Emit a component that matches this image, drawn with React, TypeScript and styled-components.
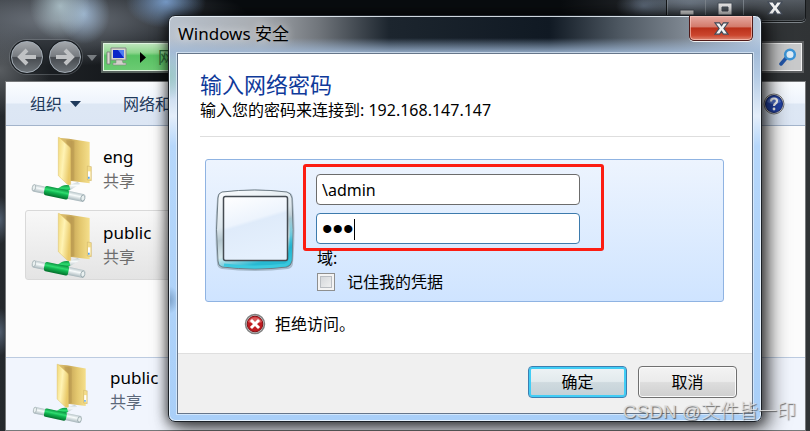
import React from "react";
import styled, { createGlobalStyle, css } from "styled-components";

const GlobalStyle = createGlobalStyle`
  * { box-sizing: border-box; }
  body {
    margin: 0;
    background: #101214;
    color: #000;
    font: 16px/24px "Noto Sans", "Noto Sans CJK SC", sans-serif;
  }
  button, input { font: inherit; color: inherit; }
`;

/* ---------- explorer window ---------- */

const Desktop = styled.div`
  position: relative;
  min-height: 100vh;
  display: flex;
  overflow: hidden;
`;

const Explorer = styled.main`
  flex: 1;
  display: flex;
  flex-direction: column;
  padding: 0 4px 0 5px;
  background:
    radial-gradient(ellipse 30px 34px at 60px 6px, rgba(190, 214, 222, 0.75), transparent),
    radial-gradient(ellipse 26px 30px at 84px 14px, rgba(170, 200, 232, 0.75), transparent),
    radial-gradient(ellipse 40px 26px at 166px 2px, rgba(130, 170, 220, 0.85), transparent),
    radial-gradient(ellipse 190px 46px at 60px 20px, rgba(125, 132, 142, 0.85), transparent),
    radial-gradient(ellipse 28px 16px at 644px 6px, rgba(110, 125, 145, 0.7), transparent),
    radial-gradient(ellipse 60px 30px at 690px 4px, rgba(130, 145, 162, 0.7), transparent),
    radial-gradient(ellipse 50px 46px at 0 70px, rgba(110, 114, 118, 0.7), transparent),
    radial-gradient(ellipse 10px 24px at 0 220px, rgba(90, 105, 125, 0.8), transparent),
    radial-gradient(ellipse 10px 24px at 0 332px, rgba(90, 105, 125, 0.8), transparent),
    linear-gradient(90deg, #25292d 0, #0a0d10 200px, #0a0d10 560px, #34383c 700px, #303335 100%);
`;

const CaptionRow = styled.div`
  height: 22px;
  display: flex;
  justify-content: flex-end;
`;

const CaptionGroup = styled.div`
  display: flex;
  border: 1px solid #15181a;
  border-top: 0;
  border-radius: 0 0 5px 5px;
  box-shadow: 0 1px 0 #7d8388, inset 0 -1px 0 #7d8388;
`;

const CaptionButton = styled.button<{ $wide?: boolean }>`
  width: ${(p) => (p.$wide ? 62 : 38)}px;
  padding: 0;
  border: 0;
  border-left: 1px solid #7d858d;
  background: linear-gradient(rgba(120, 130, 142, 0.5), rgba(40, 44, 48, 0.5));
  display: flex;
  justify-content: center;
  align-items: flex-start;
`;

const NavRow = styled.nav`
  height: 59px;
  display: flex;
  align-items: center;
  padding: 11px 2px 0 5px;
`;

const Travel = styled.div`
  display: flex;
  gap: 6px;
  padding: 1px;
  border-radius: 20px;
  background: rgba(20, 24, 28, 0.45);
  box-shadow: 0 0 0 1px rgba(150, 155, 160, 0.35);
`;

const RoundButton = styled.button`
  width: 32px;
  height: 32px;
  padding: 0;
  border: 1px solid #a4adb6;
  border-radius: 50%;
  display: grid;
  place-items: center;
  background: linear-gradient(#a4a8ac 0, #777b80 48%, #464a4f 52%, #6d7378 100%);
  box-shadow: 0 0 0 1px #1c2024;
`;

const HistoryArrow = styled.span`
  margin: 2px 4px 0 5px;
  border: 5px solid transparent;
  border-top: 6px solid #777c80;
  border-bottom: 0;
`;

const AddressBar = styled.div`
  flex: 1;
  height: 32px;
  display: flex;
  align-items: center;
  gap: 12px;
  padding: 0 3px;
  border: 2px solid #5a6560;
  box-shadow: inset 0 0 0 1px #dff4df;
  background: linear-gradient(#c2e6c0 0, #8dd58d 35%, #58c263 45%, #6ccb73 100%);
  color: #2c6637;
`;

const SearchBox = styled.button`
  width: 190px;
  height: 32px;
  margin-left: 12px;
  padding: 0 5px;
  display: flex;
  align-items: center;
  justify-content: flex-end;
  border: 2px solid #5d5f61;
  background: #c8c9ca;
  box-shadow: inset 0 0 0 1px #f0f0f0;
`;

const Client = styled.section`
  flex: 1;
  display: flex;
  flex-direction: column;
  border: 1px solid #77797b;
  background: #fcfcfc;
`;

const Toolbar = styled.div`
  height: 44px;
  display: flex;
  align-items: center;
  padding: 0 20px 0 24px;
  border-bottom: 1px solid #a3b4cb;
  background: linear-gradient(#fbfdff 0, #eef4fc 48%, #dde7f4 52%, #dce6f4 100%);
  color: #1e395b;
`;

const ToolButton = styled.button`
  display: flex;
  align-items: center;
  gap: 8px;
  padding: 0;
  margin-right: 42px;
  border: 0;
  background: none;
`;

const HelpButton = styled(ToolButton)`
  margin: 0 0 0 auto;
`;

const Items = styled.div`
  flex: 1;
  display: flex;
  flex-direction: column;
  gap: 6px;
  padding: 8px 19px;
`;

const Item = styled.button<{ $selected?: boolean }>`
  width: 100%;
  max-width: 320px;
  height: 70px;
  display: flex;
  align-items: center;
  gap: 9px;
  padding: 0 4px;
  text-align: left;
  border: 1px solid transparent;
  border-radius: 3px;
  background: none;
  ${(p) =>
    p.$selected &&
    css`
      border-color: #d9d9d9;
      background: linear-gradient(#f8f8f8, #e4e4e4);
    `}
`;

const ItemText = styled.span`
  display: flex;
  flex-direction: column;
  font-size: 17px;
`;

const Kind = styled.span<{ $blue?: boolean }>`
  font-size: 16px;
  color: ${(p) => (p.$blue ? "#5a6779" : "#6d6d6d")};
`;

const Details = styled.footer`
  height: 73px;
  display: flex;
  align-items: center;
  gap: 19px;
  padding: 0 24px 2px;
  border-top: 1px solid #bccbe0;
  background: #f1f5fd;
  ${ItemText} {
    padding-bottom: 6px;
  }
`;

/* ---------- security dialog ---------- */

const Overlay = styled.div`
  position: absolute;
  inset: 0;
  padding: 15px 48px 9px 168px;
  display: flex;
`;

const Dialog = styled.section`
  flex: 1;
  display: flex;
  flex-direction: column;
  padding: 0 8px 7px;
  border: 1px solid #1b2026;
  border-radius: 7px;
  box-shadow:
    inset 0 0 0 1px rgba(240, 248, 255, 0.85),
    0 0 12px 1px rgba(0, 0, 0, 0.6),
    6px 6px 20px 2px rgba(0, 0, 0, 0.6);
  background:
    radial-gradient(ellipse 20px 24px at 0 60px, rgba(150, 200, 190, 0.8), transparent),
    radial-gradient(ellipse 10px 14px at 0 284px, #7ba0c8, transparent),
    linear-gradient(transparent 22px, rgba(160, 185, 215, 0.85) 36px, #b4cbe4 60px, #e4eefa 100px, #b6d7fb 130px, #a9cff8 100%),
    linear-gradient(90deg, #b9c2cd 0, #a8acb1 90px, #70757b 150px, #1c252e 220px, #101923 380px, #4d5761 450px, #7a838d 510px, #b8cadf 100%);
`;

const TitleBar = styled.header`
  height: 37px;
  display: flex;
  align-items: flex-start;
  justify-content: space-between;
`;

const Caption = styled.h1`
  margin: 6px 0 0 1px;
  font-size: 17px;
  font-weight: 400;
  text-shadow: 0 0 8px rgba(255, 255, 255, 0.8);
`;

const CloseButton = styled.button`
  width: 64px;
  height: 25px;
  padding: 0;
  display: grid;
  place-items: center;
  border: 1px solid #501a18;
  border-top: 0;
  border-radius: 0 0 5px 5px;
  background: linear-gradient(#e6aaa2 0, #d37a6b 45%, #b9301a 50%, #cb452d 80%, #dd8672 100%);
  box-shadow: inset 0 0 0 1px rgba(255, 210, 200, 0.6), 0 1px 0 #f0f0f0;
`;

const Sheet = styled.form`
  flex: 1;
  display: flex;
  flex-direction: column;
  border: 1px solid #66768a;
  box-shadow: 0 0 0 1px rgba(235, 245, 255, 0.6);
  background: #fff;
`;

const Content = styled.div`
  flex: 1;
  padding: 16px 22px 0;
`;

const Heading = styled.h2`
  margin: 0;
  font-size: 22px;
  line-height: 28px;
  font-weight: 400;
  color: #0f3a9a;
`;

const Prompt = styled.p`
  margin: 0;
  padding-bottom: 14px;
  border-bottom: 1px solid #dedede;
`;

const Credential = styled.div`
  height: 143px;
  display: flex;
  align-items: flex-start;
  margin: 22px 6px 0 5px;
  padding: 4px 8px 0;
  border: 1px solid #8fb3e2;
  border-radius: 3px;
  background: linear-gradient(#edf4fe, #cfe4ff);
`;

const Portrait = styled.div`
  display: flex;
  padding-top: 24px;
`;

const Fields = styled.div`
  width: 301px;
  margin-left: 7px;
  display: flex;
  flex-direction: column;
`;

const Highlight = styled.div`
  height: 87px;
  display: flex;
  flex-direction: column;
  gap: 8px;
  padding: 7px 21px 0 10px;
  border: 3px solid #fc1d12;
  border-radius: 3px;
`;

const InputWrap = styled.div`
  position: relative;
  display: flex;
`;

const TextInput = styled.input<{ $active?: boolean }>`
  width: 100%;
  height: 31px;
  padding: 0 5px;
  border: 1px solid ${(p) => (p.$active ? "#3d7bad" : "#6c6c6c")};
  border-radius: 4px;
  background: #fff;
  outline: 0;
  &[type="password"] {
    font-family: "Liberation Sans", sans-serif;
    font-size: 30px;
  }
`;

const Caret = styled.span`
  position: absolute;
  left: 38px;
  top: 6px;
  width: 1px;
  height: 21px;
  background: #000;
`;

const Domain = styled.span`
  height: 17px;
  padding-left: 14px;
  line-height: 14px;
`;

const Remember = styled.label`
  display: flex;
  align-items: center;
  gap: 12px;
  padding-left: 14px;
  line-height: 28px;
`;

const CheckBox = styled.input`
  appearance: none;
  width: 18px;
  height: 18px;
  margin: 0;
  border: 1px solid #8e8f8f;
  box-shadow: inset 0 0 0 2px #f4f4f4, inset 0 0 0 3px #b9bdc2;
  background: linear-gradient(135deg, #cdd1d5, #f6f6f6);
`;

const Failure = styled.p`
  display: flex;
  align-items: center;
  gap: 9px;
  margin: 10px 0 0 44px;
`;

const Actions = styled.div`
  height: 60px;
  display: flex;
  justify-content: flex-end;
  gap: 11px;
  padding: 12px 15px;
  border-top: 1px solid #dfdfdf;
  background: #f0f0f0;
`;

const PushButton = styled.button<{ $primary?: boolean }>`
  width: 99px;
  height: 32px;
  padding: 0;
  border: 1px solid ${(p) => (p.$primary ? "#3c7fb1" : "#707070")};
  border-radius: 4px;
  background: ${(p) =>
    p.$primary
      ? "linear-gradient(#eef3f5 0, #e2eaed 48%, #cfdadf 52%, #c2d0d6 100%)"
      : "linear-gradient(#f3f3f3 0, #ebebeb 48%, #dddddd 52%, #cfcfcf 100%)"};
  box-shadow: ${(p) =>
    p.$primary ? "inset 0 0 0 2px #41cdf5" : "inset 0 0 0 1px #fbfbfb"};
`;

const Watermark = styled.span`
  position: absolute;
  right: 14px;
  bottom: 6px;
  font: 300 19px/26px "Liberation Sans", "Noto Sans CJK SC", sans-serif;
  color: rgba(225, 225, 225, 0.85);
  text-shadow: 1px 1px 1px rgba(70, 70, 70, 0.8);
`;

/* ---------- drawings ---------- */

function Cross({ size }: { size: number }) {
  return (
    <svg width={size} height={size} viewBox="0 0 16 16" aria-hidden="true">
      <path
        d="M1 2h5l2 3 2-3h5l-4.500 6L15 14h-5l-2-3-2 3H1l4.500-6z"
        fill="#f3f3f3"
        stroke="#424b59"
        strokeWidth="1.200"
      />
    </svg>
  );
}

function SharedFolder({ width, height, id }: { width: number; height: number; id: string }) {
  return (
    <svg width={width} height={height} viewBox="87 15 192 204" aria-hidden="true">
      <defs>
        <linearGradient id={id + "back"}>
          <stop offset="0" stopColor="#e3c878" />
          <stop offset="0.400" stopColor="#c7a657" />
          <stop offset="0.700" stopColor="#e4c86f" />
          <stop offset="1" stopColor="#f5df8c" />
        </linearGradient>
        <linearGradient id={id + "front"} x1="0" y1="0" x2="1" y2="0.400">
          <stop offset="0" stopColor="#f1d878" />
          <stop offset="0.500" stopColor="#fff3b4" />
          <stop offset="1" stopColor="#e9c968" />
        </linearGradient>
        <linearGradient id={id + "pipe"} x1="0" y1="0" x2="0" y2="1">
          <stop offset="0" stopColor="#0a9440" />
          <stop offset="0.350" stopColor="#2fdc70" />
          <stop offset="0.550" stopColor="#10b550" />
          <stop offset="1" stopColor="#04702c" />
        </linearGradient>
        <linearGradient id={id + "glass"} x1="0" y1="0" x2="0" y2="1">
          <stop offset="0" stopColor="#b7c4c8" />
          <stop offset="0.400" stopColor="#f8fcfc" />
          <stop offset="1" stopColor="#a5b4b9" />
        </linearGradient>
      </defs>
      <path d="M174 23l30 3 62 10v124l-60-8-32-20z" fill={`url(#${id}back)`} />
      <path d="M196 30l24 4v116l-14 2z" fill="#a98a48" opacity="0.350" />
      <path d="M259 108l12 2v42l-12-2z" fill="#f4dd8b" stroke="#c9ad62" strokeWidth="1.500" />
      <path d="M261 124h7v22h-7z" fill="#fff" />
      <path d="M261 140h5v6h-5z" fill="#58a4e8" />
      <path
        d="M172 22q4 1 8 5l26 24q3 3 3 8v110l-10-6-27-26z"
        fill={`url(#${id}front)`}
        stroke="#dcbe66"
        strokeWidth="1.500"
      />
      <path d="M196 168l34-12 8 6-34 20z" fill={`url(#${id}glass)`} opacity="0.850" />
      <path d="M168 178q18-16 36-12l4 12-18 14z" fill={`url(#${id}pipe)`} />
      <g transform="rotate(12 95 172)">
        <rect x="93" y="162" width="42" height="22" rx="8" fill={`url(#${id}glass)`} />
        <rect x="198" y="160" width="58" height="24" rx="8" fill={`url(#${id}glass)`} />
        <ellipse cx="249" cy="172" rx="6" ry="9" fill="#e9f0f0" stroke="#82949a" strokeWidth="2" />
        <ellipse cx="99" cy="172" rx="5" ry="9" fill="#e9f0f0" stroke="#98a6aa" strokeWidth="2" />
        <rect x="131" y="159" width="74" height="28" rx="6" fill={`url(#${id}pipe)`} />
      </g>
    </svg>
  );
}

function Arrow({ flip }: { flip?: boolean }) {
  return (
    <svg width="22" height="20" viewBox="0 0 22 20" aria-hidden="true">
      <path
        d={flip ? "M2 10h16M11 3l7 7-7 7" : "M20 10H4M11 3l-7 7 7 7"}
        fill="none"
        stroke="#c0c2c4"
        strokeWidth="4"
      />
    </svg>
  );
}

function Computer() {
  return (
    <svg width="22" height="20" viewBox="0 0 22 20" aria-hidden="true">
      <path d="M1 5h3v12H1z" fill="#d9d9cf" stroke="#777" strokeWidth="0.800" />
      <path d="M5 1h15v12H5z" fill="#d6d6ce" stroke="#888" />
      <path d="M7 3h11v8H7z" fill="#0b24c8" />
      <path d="M12 3h6v8z" fill="#4e7df2" />
      <path d="M10 13h6l1 3h3v2H7v-2h3z" fill="#d2d2ca" stroke="#888" strokeWidth="0.600" />
    </svg>
  );
}

function Magnifier() {
  return (
    <svg width="18" height="18" viewBox="0 0 18 18" aria-hidden="true">
      <path d="M2 16l6-7" stroke="#2356a8" strokeWidth="3.500" strokeLinecap="round" />
      <circle cx="11" cy="6.500" r="4.800" fill="#dcecf7" stroke="#3b94d6" strokeWidth="2.500" />
    </svg>
  );
}

function Help() {
  return (
    <svg width="22" height="22" viewBox="0 0 22 22" aria-hidden="true">
      <circle cx="11" cy="11" r="10" fill="#d5d5d5" stroke="#777" />
      <circle cx="11" cy="11" r="8.500" fill="#2444a8" stroke="#182b70" />
      <path d="M4 9a7.500 7.500 0 0 1 14 0q-7 4-14 0z" fill="#6e8ddb" opacity="0.600" />
      <path d="M8 8.500q0-3 3-3t3 2.500q0 1.500-1.500 2.500T11 13" fill="none" stroke="#fff" strokeWidth="2.200" />
      <circle cx="11" cy="16" r="1.400" fill="#fff" />
    </svg>
  );
}

function UserTile() {
  return (
    <svg width="82" height="84" viewBox="0 0 82 84" aria-hidden="true">
      <defs>
        <linearGradient id="tileFrame" x1="0" y1="0" x2="0.300" y2="1">
          <stop offset="0" stopColor="#fbfdff" />
          <stop offset="0.450" stopColor="#dce6ec" />
          <stop offset="0.600" stopColor="#b4c6ce" />
          <stop offset="0.800" stopColor="#d7e8ed" />
          <stop offset="1" stopColor="#28b9d2" />
        </linearGradient>
        <linearGradient id="tilePane" x1="0" y1="0" x2="0.300" y2="1">
          <stop offset="0" stopColor="#fff" />
          <stop offset="0.450" stopColor="#edf4fd" />
          <stop offset="0.500" stopColor="#dfebfa" />
          <stop offset="1" stopColor="#e5f0fd" />
        </linearGradient>
        <linearGradient id="tileGlow" x1="0" y1="0" x2="0" y2="1">
          <stop offset="0.200" stopColor="#27b8d3" stopOpacity="0" />
          <stop offset="0.700" stopColor="#20b4d0" />
          <stop offset="1" stopColor="#3ccbe0" />
        </linearGradient>
      </defs>
      <path d="M8 4Q41-1 74 4q5 1 5 7 3 32 0 64 0 5-5 6-33 4-66 0-5-1-5-6-3-32 0-64 0-6 5-7z" fill="#647783" opacity="0.400" />
      <path d="M8 4Q41 0 73 4q4 1 5 6 2 32 0 63-1 5-5 6-32 4-65 0-4-1-4-6-3-31 0-63 0-5 4-6z" fill="url(#tileFrame)" stroke="#6f7d86" />
      <path d="M76 14q2 30 0 58-1 4-5 5-30 4-61 0" fill="none" stroke="url(#tileGlow)" strokeWidth="3" />
      <rect x="9.500" y="8.500" width="64" height="64" rx="2" fill="url(#tilePane)" stroke="#454b52" strokeWidth="1.500" />
    </svg>
  );
}

function ErrorMark() {
  return (
    <svg width="22" height="22" viewBox="0 0 22 22" aria-hidden="true">
      <circle cx="11" cy="11" r="9.500" fill="#cfcfcf" stroke="#808080" strokeWidth="1.500" />
      <circle cx="11" cy="11" r="7.800" fill="#bf1b20" stroke="#861016" />
      <path d="M4 9a7.500 7.500 0 0 1 14 0q-7 3-14 0z" fill="#ec8583" opacity="0.600" />
      <path d="M8 8l6 6M14 8l-6 6" stroke="#fff" strokeWidth="3" strokeLinecap="square" />
    </svg>
  );
}

function Triangle({ down }: { down?: boolean }) {
  return (
    <svg width={down ? 11 : 6} height={down ? 6 : 11} aria-hidden="true">
      <path d={down ? "M0 0h11L5.500 6z" : "M0 0l6 5.500L0 11z"} fill={down ? "#1e395b" : "#000"} />
    </svg>
  );
}

const folders = [
  { name: "eng", selected: false },
  { name: "public", selected: true },
];

export default function App() {
  return (
    <>
      <GlobalStyle />
      <Desktop>
        <Explorer>
          <CaptionRow>
            <CaptionGroup>
              <CaptionButton aria-label="最小化">
                <svg width="16" height="16" aria-hidden="true">
                  <path d="M1 10h14v5H1z" fill="#eee" stroke="#48505a" />
                </svg>
              </CaptionButton>
              <CaptionButton aria-label="最大化">
                <svg width="16" height="16" aria-hidden="true">
                  <path d="M1 3h14v12H1zM5 7v4h6V7z" fill="#eee" fillRule="evenodd" stroke="#48505a" />
                </svg>
              </CaptionButton>
              <CaptionButton $wide aria-label="关闭窗口">
                <Cross size={16} />
              </CaptionButton>
            </CaptionGroup>
          </CaptionRow>
          <NavRow>
            <Travel>
              <RoundButton aria-label="后退"><Arrow /></RoundButton>
              <RoundButton aria-label="前进"><Arrow flip /></RoundButton>
            </Travel>
            <HistoryArrow />
            <AddressBar>
              <Computer />
              <Triangle />
              <span>网</span>
            </AddressBar>
            <SearchBox aria-label="搜索"><Magnifier /></SearchBox>
          </NavRow>
          <Client>
            <Toolbar>
              <ToolButton>组织 <Triangle down /></ToolButton>
              <ToolButton>网络和</ToolButton>
              <HelpButton aria-label="帮助"><Help /></HelpButton>
            </Toolbar>
            <Items>
              {folders.map((f) => (
                <Item key={f.name} $selected={f.selected}>
                  <SharedFolder width={64} height={68} id={f.name} />
                  <ItemText>
                    {f.name}
                    <Kind>共享</Kind>
                  </ItemText>
                </Item>
              ))}
            </Items>
            <Details>
              <SharedFolder width={61} height={62} id="details" />
              <ItemText>
                public
                <Kind $blue>共享</Kind>
              </ItemText>
            </Details>
          </Client>
        </Explorer>

        <Overlay>
          <Dialog role="dialog" aria-labelledby="caption">
            <TitleBar>
              <Caption id="caption">Windows 安全</Caption>
              <CloseButton aria-label="关闭"><Cross size={15} /></CloseButton>
            </TitleBar>
            <Sheet onSubmit={(e) => e.preventDefault()}>
              <Content>
                <Heading>输入网络密码</Heading>
                <Prompt>输入您的密码来连接到: 192.168.147.147</Prompt>
                <Credential>
                  <Portrait><UserTile /></Portrait>
                  <Fields>
                    <Highlight>
                      <TextInput aria-label="用户名" defaultValue="\admin" />
                      <InputWrap>
                        <TextInput $active type="password" aria-label="密码" defaultValue="123" />
                        <Caret />
                      </InputWrap>
                    </Highlight>
                    <Domain>域:</Domain>
                    <Remember>
                      <CheckBox type="checkbox" />
                      记住我的凭据
                    </Remember>
                  </Fields>
                </Credential>
                <Failure role="alert"><ErrorMark />拒绝访问。</Failure>
              </Content>
              <Actions>
                <PushButton $primary type="submit">确定</PushButton>
                <PushButton type="button">取消</PushButton>
              </Actions>
            </Sheet>
          </Dialog>
        </Overlay>
        <Watermark>CSDN @文件皆一印</Watermark>
      </Desktop>
    </>
  );
}
